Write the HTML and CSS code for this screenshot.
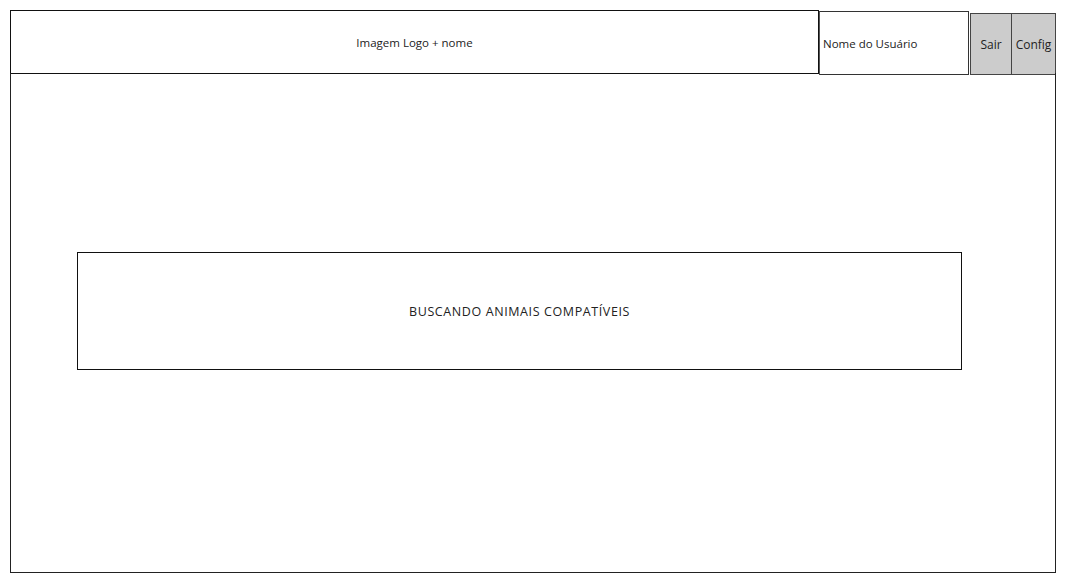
FILE: index.html
```html
<!DOCTYPE html>
<html lang="pt-BR">
<head>
    <meta charset="UTF-8">
    <meta name="viewport" content="width=device-width, initial-scale=1.0">
    <title>Buscando animais</title>
    <link rel="stylesheet" href="styles.css">
</head>
<body>
    <div class="screen">
        <div class="header">
            <div class="logo">Imagem Logo + nome</div>
            <div class="user">Nome do Usuário</div>
            <div class="actions">
                <button class="btn">Sair</button>
                <button class="btn">Config</button>
            </div>
        </div>
        <div class="content">
            <div class="status">BUSCANDO ANIMAIS COMPATÍVEIS</div>
        </div>
    </div>
</body>
</html>
```

FILE: styles.css
```css
body {
    margin: 0;
    padding: 10px;
    background-color: #fff;
    font-family: "Open Sans", "DejaVu Sans", sans-serif;
    font-size: 11px;
    color: #222;
}

.screen {
    width: 1046px;
    display: flex;
    flex-direction: column;
}

.header {
    display: flex;
    align-items: flex-start;
    height: 65px;
}

.logo {
    flex-shrink: 0;
    width: 807px;
    height: 62px;
    border: 1px solid #111;
    display: flex;
    align-items: center;
    justify-content: center;
    font-size: 11.5px;
}

.user {
    flex-shrink: 0;
    width: 145px;
    height: 62px;
    margin-top: 1px;
    border: 1px solid #333;
    border-left-color: #555;
    padding-left: 3px;
    display: flex;
    align-items: center;
    font-size: 11.5px;
}

.actions {
    flex-shrink: 0;
    display: flex;
    margin-top: 3px;
    margin-left: 1px;
    height: 62px;
}

.btn {
    width: 42px;
    height: 62px;
    padding: 0;
    margin: 0;
    background-color: #ccc;
    border: 1px solid #444;
    font-family: inherit;
    font-size: 12px;
    color: #222;
    cursor: pointer;
}

.btn + .btn {
    border-left: none;
    width: 44px;
}

.content {
    width: 1046px;
    height: 500px;
    border: 1px solid #222;
    border-top: none;
    padding: 179px 0 0 66px;
    box-sizing: border-box;
    margin-top: -2px;
}

.status {
    width: 883px;
    height: 116px;
    border: 1px solid #111;
    display: flex;
    align-items: center;
    justify-content: center;
    font-size: 12.5px;
    letter-spacing: 0.6px;
}
```
